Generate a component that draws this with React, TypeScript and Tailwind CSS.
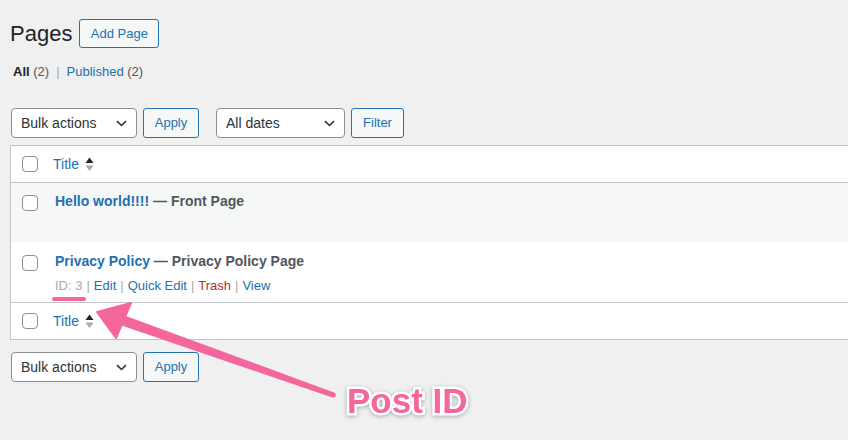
import React from 'react';

const Checkbox = () => (
  <span className="block h-4 w-4 shrink-0 rounded-[4px] border border-[#8c8f94] bg-white" />
);

const SortArrows = () => (
  <svg width="9" height="15" viewBox="0 0 9 15" className="ml-[6px]">
    <path d="M4.5 0.5L8.5 6H0.5Z" fill="#1d2327" />
    <path d="M4.5 14L8.5 8.5H0.5Z" fill="#a7aaad" />
  </svg>
);

const Select = ({ label, width }: { label: string; width: string }) => (
  <div
    className={`flex h-[30px] ${width} items-center justify-between rounded-[4px] border border-[#8c8f94] bg-white pl-[9px] pr-[9px] text-[14px] text-[#2c3338]`}
  >
    <span>{label}</span>
    <svg width="11" height="7" viewBox="0 0 11 7">
      <path d="M1 1.2l4.5 4.3L10 1.2" fill="none" stroke="#2c3338" strokeWidth="1.6" />
    </svg>
  </div>
);

const Button = ({ children, width }: { children: React.ReactNode; width: string }) => (
  <button
    className={`flex h-[30px] ${width} items-center justify-center rounded-[3px] border border-[#2271b1] bg-[#f6f7f7] text-[13px] text-[#2271b1]`}
  >
    {children}
  </button>
);

const Sep = () => <span className="px-[4px] text-[#a7aaad]">|</span>;

const TitleHeader = () => (
  <div className="flex h-[36px] items-center bg-white pl-[11px]">
    <Checkbox />
    <span className="ml-[15px] text-[14px] text-[#2271b1]">Title</span>
    <SortArrows />
  </div>
);

export default function App() {
  return (
    <div className="relative h-[440px] w-[848px] overflow-hidden bg-[#f0f0f1] font-['Liberation_Sans',Arial,sans-serif] text-[13px] text-[#3c434a]">
      <div className="pl-[10px]">
        {/* heading */}
        <div className="flex items-center pt-[19px]">
          <h1 className="text-[22px] leading-[29px] font-normal text-[#1d2327]">Pages</h1>
          <button className="ml-[7px] flex h-[29px] w-[80px] items-center justify-center rounded-[3px] border border-[#2271b1] bg-[#f6f7f7] text-[13px] text-[#2271b1]">
            Add Page
          </button>
        </div>

        {/* views */}
        <div className="mt-[14px] pl-[3px] text-[13px] leading-[20px]">
          <span className="font-bold text-[#1d2327]">All</span>
          <span className="text-[#50575e]"> (2)</span>
          <span className="px-[7px] text-[#a7aaad]">|</span>
          <span className="text-[#2271b1]">Published</span>
          <span className="text-[#50575e]"> (2)</span>
        </div>

        {/* top tablenav */}
        <div className="mt-[26px] flex items-center pl-px">
          <Select label="Bulk actions" width="w-[126px]" />
          <div className="ml-[6px]">
            <Button width="w-[56px]">Apply</Button>
          </div>
          <div className="ml-[17px]">
            <Select label="All dates" width="w-[129px]" />
          </div>
          <div className="ml-[6px]">
            <Button width="w-[53px]">Filter</Button>
          </div>
        </div>

        {/* table */}
        <div className="mt-[7px] w-[850px] border border-[#c3c4c7] bg-white">
          <div className="border-b border-[#c3c4c7]">
            <TitleHeader />
          </div>

          <div className="flex h-[59px] items-start bg-[#f6f7f7] pl-[11px]">
            <div className="pt-[12px]">
              <Checkbox />
            </div>
            <div className="ml-[17px] pt-[8px] text-[14px] leading-[20px] font-bold">
              <span className="text-[#2271b1]">Hello world!!!!</span>
              <span className="text-[#50575e]"> — Front Page</span>
            </div>
          </div>

          <div className="relative flex h-[60px] items-start bg-white pl-[11px]">
            <div className="pt-[13px]">
              <Checkbox />
            </div>
            <div className="ml-[17px] pt-[9px]">
              <div className="text-[14px] leading-[20px] font-bold">
                <span className="text-[#2271b1]">Privacy Policy</span>
                <span className="text-[#50575e]"> — Privacy Policy Page</span>
              </div>
              <div className="mt-[5px] text-[13px] leading-[20px]">
                <span className="text-[#a7aaad]">ID: 3</span>
                <Sep />
                <span className="text-[#2271b1]">Edit</span>
                <Sep />
                <span className="text-[#2271b1]">Quick Edit</span>
                <Sep />
                <span className="text-[#b32d2e]">Trash</span>
                <Sep />
                <span className="text-[#2271b1]">View</span>
              </div>
            </div>
            {/* highlight under the ID */}
            <span className="absolute top-[55px] left-[41px] h-[4px] w-[34px] rounded-full bg-[#f3679c]" />
          </div>

          <div className="border-t border-[#c3c4c7]">
            <TitleHeader />
          </div>
        </div>

        {/* bottom tablenav */}
        <div className="mt-[12px] flex items-center pl-px">
          <Select label="Bulk actions" width="w-[126px]" />
          <div className="ml-[6px]">
            <Button width="w-[56px]">Apply</Button>
          </div>
        </div>
      </div>

      {/* annotation arrow */}
      <svg className="pointer-events-none absolute inset-0" width="848" height="440" viewBox="0 0 848 440">
        <polygon points="97,312 131,303 116,338" fill="#f3679c" strokeLinejoin="round" stroke="#f3679c" strokeWidth="2" />
        <polygon points="124.5,315.5 121.5,325.5 332.5,397.6 334,392.4" fill="#f3679c" />
        <circle cx="333.2" cy="395" r="2.6" fill="#f3679c" />
      </svg>

      <span className="pointer-events-none absolute top-[383px] left-[347px] text-[35px] leading-[35px] font-bold text-[#f3679c] [-webkit-text-stroke:5px_white] [paint-order:stroke_fill] drop-shadow-[0_1px_2px_rgba(0,0,0,0.3)]">
        Post ID
      </span>
    </div>
  );
}
